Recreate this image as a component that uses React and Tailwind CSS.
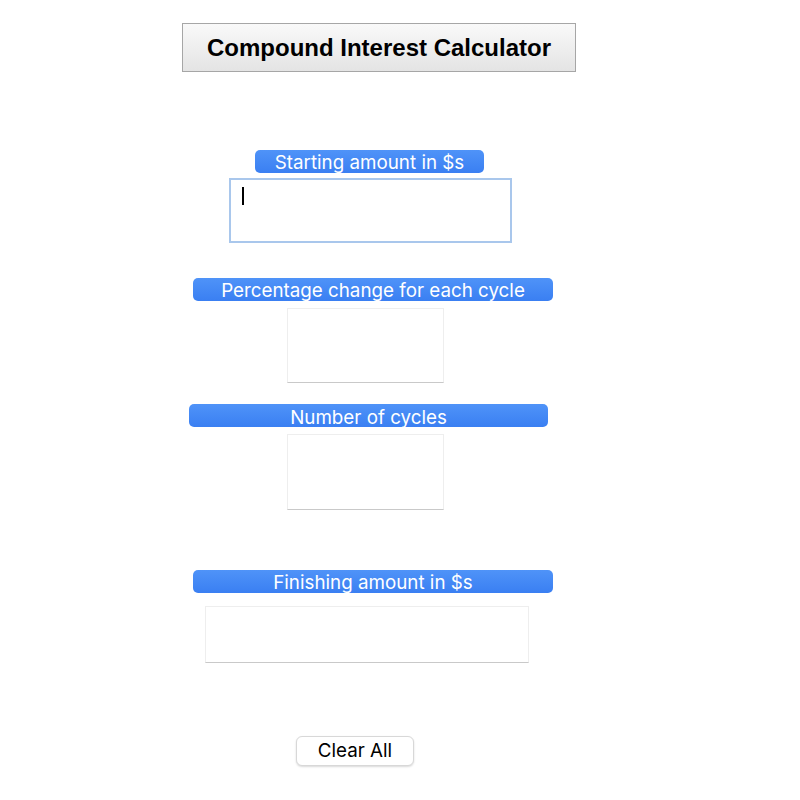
import React from 'react';

const font = { fontFamily: 'Inter, "Liberation Sans", sans-serif' };

const Label = ({ children, className }) => (
    <div className={`h-[23px] rounded-[5px] bg-gradient-to-b from-[#4f93f8] to-[#3a7ff2] text-white text-center text-[18.8px] leading-[25px] overflow-visible ${className}`}>
        {children}
    </div>
);

const Field = ({ className }) => (
    <div className={`bg-white border border-[#eeeeee] border-b-[#c9c9c9] ${className}`}></div>
);

export default function App() {
    return (
        <div className="w-[800px] h-[800px] bg-white flex flex-col items-start" style={font}>
            <div className="mt-[23px] ml-[182px] w-[394px] h-[49px] border border-[#a6a6a6] bg-gradient-to-b from-[#f9f9f9] to-[#e4e4e4] flex items-center justify-center">
                <span className="text-[24px] font-bold text-black" style={{ fontFamily: '"Liberation Sans", Arial, sans-serif' }}>Compound Interest Calculator</span>
            </div>

            <Label className="mt-[78px] ml-[255px] w-[229px]">Starting amount in $s</Label>
            <div className="mt-[5px] ml-[229px] w-[283px] h-[65px] border-2 border-[#a9c7ec] bg-white relative">
                <div className="absolute left-[11px] top-[7px] w-[2px] h-[18px] bg-black"></div>
            </div>

            <Label className="mt-[35px] ml-[193px] w-[360px]">Percentage change for each cycle</Label>
            <Field className="mt-[7px] ml-[287px] w-[157px] h-[75px]" />

            <Label className="mt-[21px] ml-[189px] w-[359px] leading-[28px]">Number of cycles</Label>
            <Field className="mt-[7px] ml-[287px] w-[157px] h-[76px]" />

            <Label className="mt-[60px] ml-[193px] w-[360px]">Finishing amount in $s</Label>
            <Field className="mt-[13px] ml-[205px] w-[324px] h-[57px]" />

            <button className="mt-[73px] ml-[296px] w-[118px] h-[30px] rounded-[6px] border border-[#d8d8d8] bg-white shadow-[0_1px_2px_rgba(0,0,0,0.15)] text-[18.8px] text-black">
                Clear All
            </button>
        </div>
    );
}
